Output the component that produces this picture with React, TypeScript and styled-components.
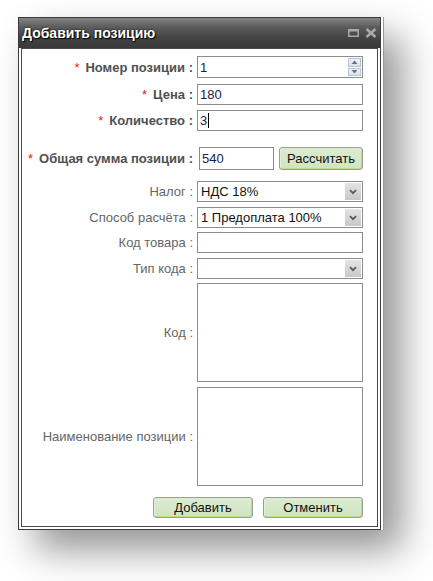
import React, { FC } from "react";
import styled, { createGlobalStyle } from "styled-components";

const GlobalStyle = createGlobalStyle`
  body {
    margin: 0;
    background: #fff;
    font-family: "Liberation Sans", Arial, sans-serif;
  }
`;

const Page = styled.div`
  padding: 17px 0 60px 18px;
`;

const Frame = styled.div`
  width: 363px;
  padding-right: 2px;
  border-right: 1px solid #9a9a9a;
  box-shadow: 18px 20px 36px rgba(0, 0, 0, 0.42);
`;

const Window = styled.div`
  width: 363px;
  box-sizing: border-box;
  border: 1px solid #3b3b3b;
  background: #fff;
`;

const TitleBar = styled.div`
  height: 30px;
  display: flex;
  align-items: center;
  padding: 0 3px 0 3px;
  background: linear-gradient(#858585 0%, #5c5c5c 30%, #444 65%, #383838 100%);
`;

const Title = styled.span`
  color: #fff;
  font-size: 14px;
  font-weight: bold;
  text-shadow: 0 0 2px #000, 1px 1px 1px #000;
`;

const Tools = styled.div`
  margin-left: auto;
  display: flex;
  align-items: center;
  gap: 6px;
`;

const Body = styled.div`
  margin: 0 2px 2px;
  border: 1px solid #4a4a4a;
  padding: 7px 14px 8px 0;
  display: flex;
  flex-direction: column;
`;

const Row = styled.div<{ $gap?: number }>`
  display: grid;
  grid-template-columns: 1fr 166px;
  column-gap: 4px;
  align-items: center;
  margin-top: ${({ $gap }) => $gap ?? 0}px;
`;

const Label = styled.label<{ $required?: boolean }>`
  text-align: right;
  font-size: 13px;
  white-space: nowrap;
  color: ${({ $required }) => ($required ? "#505050" : "#666")};
  font-weight: ${({ $required }) => ($required ? "bold" : "normal")};
`;

const Star = styled.span`
  color: #e01b1b;
  font-weight: normal;
  margin-right: 6px;
`;

const Input = styled.input<{ $h?: number }>`
  width: 100%;
  height: ${({ $h }) => $h ?? 21}px;
  box-sizing: border-box;
  border: 1px solid #8c8c8c;
  padding: 0 2px;
  margin: 0;
  font-family: "Liberation Sans", Arial, sans-serif;
  font-size: 13px;
  color: #1c1c40;
  background: #fff;
  outline: none;
`;

const CaretWrap = styled.div`
  position: relative;
`;

const Caret = styled.span`
  position: absolute;
  left: 11px;
  top: 3px;
  width: 1px;
  height: 15px;
  background: #000;
`;

const SpinBox = styled.div`
  display: flex;
  height: 22px;
  box-sizing: border-box;
  border: 1px solid #8c8c8c;
`;

const SpinInput = styled(Input)`
  border: none;
  height: 100%;
  flex: 1;
  min-width: 0;
`;

const SpinCol = styled.div`
  width: 15px;
  display: flex;
  flex-direction: column;
  gap: 1px;
  padding: 1px;
  box-sizing: border-box;
`;

const SpinBtn = styled.div`
  flex: 1;
  display: flex;
  align-items: center;
  justify-content: center;
  background: linear-gradient(#edf2f8, #d9e3ef);
  border: 1px solid #b8c3d2;
`;

const Compound = styled.div`
  display: flex;
  gap: 5px;
  margin-left: 2px;
  margin-right: -1px;
`;

const Button = styled.button<{ $w?: number; $h?: number }>`
  width: ${({ $w }) => $w ?? 100}px;
  height: ${({ $h }) => $h ?? 21}px;
  box-sizing: border-box;
  padding: 0;
  border: 1px solid #98a091;
  border-radius: 3px;
  background: linear-gradient(#dcebd1, #d0e4c2);
  box-shadow: inset -1px -1px 0 #bcdc8a, inset 1px 0 0 #e4f0da;
  font-family: "Liberation Sans", Arial, sans-serif;
  font-size: 13px;
  color: #111;
`;

const Select = styled.div`
  display: flex;
  height: 21px;
  box-sizing: border-box;
  border: 1px solid #8c8c8c;
  background: #fff;
`;

const SelectValue = styled.div`
  flex: 1;
  padding-left: 3px;
  font-size: 13px;
  line-height: 19px;
  color: #111;
`;

const SelectArrow = styled.div`
  width: 16px;
  margin: 1px;
  display: flex;
  align-items: center;
  justify-content: center;
  background: linear-gradient(#e4e4e4, #c8c8c8);
`;

const TextArea = styled.textarea`
  display: block;
  width: 100%;
  height: 99px;
  box-sizing: border-box;
  border: 1px solid #8c8c8c;
  margin: 0;
  resize: none;
  outline: none;
  font-family: "Liberation Sans", Arial, sans-serif;
  font-size: 13px;
`;

const Footer = styled.div`
  display: flex;
  justify-content: flex-end;
  gap: 10px;
  margin-top: 11px;
`;

const Chevron: FC = () => (
  <svg width="8" height="6" viewBox="0 0 8 6">
    <path d="M1 1.2 L4 4.2 L7 1.2" fill="none" stroke="#5a5a5a" strokeWidth="1.8" />
  </svg>
);

const Tri: FC<{ up?: boolean }> = ({ up }) => (
  <svg width="7" height="4" viewBox="0 0 7 4">
    <path d={up ? "M0.5 4 L3.5 0.5 L6.5 4 Z" : "M0.5 0 L6.5 0 L3.5 3.5 Z"} fill="#6b7382" />
  </svg>
);

const SelectField: FC<{ value?: string }> = ({ value }) => (
  <Select>
    <SelectValue>{value}</SelectValue>
    <SelectArrow>
      <Chevron />
    </SelectArrow>
  </Select>
);

export default function App() {
  return (
    <Page>
      <GlobalStyle />
      <Frame>
        <Window>
          <TitleBar>
            <Title>Добавить позицию</Title>
            <Tools>
              <svg width="11" height="8" viewBox="0 0 11 8">
                <rect x="0.75" y="1.25" width="9.5" height="6" fill="none" stroke="#a9a9a9" strokeWidth="1.5" />
                <rect x="0" y="0" width="11" height="2.5" fill="#a9a9a9" />
              </svg>
              <svg width="12" height="10" viewBox="0 0 12 10">
                <path d="M1.5 1 L10.5 9 M10.5 1 L1.5 9" stroke="#a9a9a9" strokeWidth="2.6" />
              </svg>
            </Tools>
          </TitleBar>
          <Body>
            <Row>
              <Label $required>
                <Star>*</Star>Номер позиции :
              </Label>
              <SpinBox>
                <SpinInput defaultValue="1" />
                <SpinCol>
                  <SpinBtn>
                    <Tri up />
                  </SpinBtn>
                  <SpinBtn>
                    <Tri />
                  </SpinBtn>
                </SpinCol>
              </SpinBox>
            </Row>
            <Row $gap={6}>
              <Label $required>
                <Star>*</Star>Цена :
              </Label>
              <Input defaultValue="180" />
            </Row>
            <Row $gap={5}>
              <Label $required>
                <Star>*</Star>Количество :
              </Label>
              <CaretWrap>
                <Input defaultValue="3" />
                <Caret />
              </CaretWrap>
            </Row>
            <Row $gap={16}>
              <Label $required>
                <Star>*</Star>Общая сумма позиции :
              </Label>
              <Compound>
                <Input $h={23} defaultValue="540" style={{ width: 75 }} />
                <Button $w={84} $h={23}>
                  Рассчитать
                </Button>
              </Compound>
            </Row>
            <Row $gap={11}>
              <Label>Налог :</Label>
              <SelectField value="НДС 18%" />
            </Row>
            <Row $gap={5}>
              <Label>Способ расчёта :</Label>
              <SelectField value="1 Предоплата 100%" />
            </Row>
            <Row $gap={4}>
              <Label>Код товара :</Label>
              <Input />
            </Row>
            <Row $gap={5}>
              <Label>Тип кода :</Label>
              <SelectField />
            </Row>
            <Row $gap={4}>
              <Label>Код :</Label>
              <TextArea />
            </Row>
            <Row $gap={5}>
              <Label>Наименование позиции :</Label>
              <TextArea />
            </Row>
            <Footer>
              <Button>Добавить</Button>
              <Button>Отменить</Button>
            </Footer>
          </Body>
        </Window>
      </Frame>
    </Page>
  );
}
